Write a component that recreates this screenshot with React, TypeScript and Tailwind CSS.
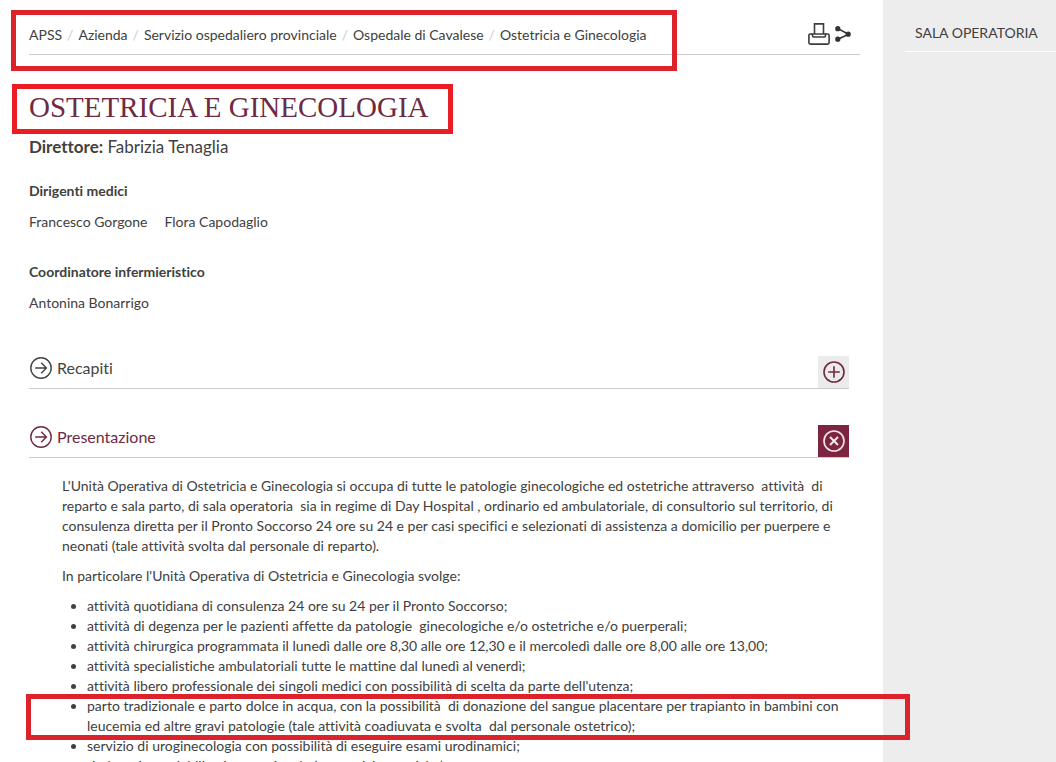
import { ReactNode } from "react";

const breadcrumbs = [
  "APSS",
  "Azienda",
  "Servizio ospedaliero provinciale",
  "Ospedale di Cavalese",
  "Ostetricia e Ginecologia",
];

const activities = [
  { text: "attività quotidiana di consulenza 24 ore su 24 per il Pronto Soccorso;" },
  { text: "attività di degenza per le pazienti affette da patologie\u00a0 ginecologiche e/o ostetriche e/o puerperali;" },
  { text: "attività chirurgica programmata il lunedì dalle ore 8,30 alle ore 12,30 e il mercoledì dalle ore 8,00 alle ore 13,00;" },
  { text: "attività specialistiche ambulatoriali tutte le mattine dal lunedì al venerdì;" },
  { text: "attività libero professionale dei singoli medici con possibilità di scelta da parte dell'utenza;" },
  {
    text: "parto tradizionale e parto dolce in acqua, con la possibilità\u00a0 di donazione del sangue placentare per trapianto in bambini con leucemia ed altre gravi patologie (tale attività coadiuvata e svolta\u00a0 dal personale ostetrico);",
    marked: true,
  },
  { text: "servizio di uroginecologia con possibilità di eseguire esami urodinamici;" },
  { text: "rieducazione, riabilitazione perineale (operatrici ostetriche)." },
];

function Marker({ className }: { className: string }) {
  return <div className={`absolute pointer-events-none border-5 ${className}`} />;
}

function PrintIcon() {
  return (
    <svg width="22" height="22" viewBox="0 0 22 22" fill="none" stroke="#3c3c3c" strokeWidth="1.6">
      <path d="M6.5 11V.9h9V11" />
      <path d="M4.5 11H2.2Q.9 11 .9 12.3v7.5q0 1.3 1.3 1.3h17.6q1.3 0 1.3-1.3v-7.5q0-1.3-1.3-1.3h-2.3" />
      <path d="M4.5 11h13v1.8q0 1.2-1.2 1.2H5.7q-1.2 0-1.2-1.2z" />
    </svg>
  );
}

function ShareIcon() {
  return (
    <svg width="16" height="16" viewBox="0 0 16 16" fill="#333" stroke="#333" strokeWidth="1.6">
      <path d="M3 2.6l10.5 5.6L3 13.2" fill="none" />
      <circle cx="2.8" cy="2.7" r="1.8" />
      <circle cx="13.2" cy="8.2" r="1.8" />
      <circle cx="2.8" cy="13.2" r="1.8" />
    </svg>
  );
}

function ArrowIcon() {
  return (
    <svg width="22" height="22" viewBox="0 0 22 22" fill="none" stroke="currentColor" strokeWidth="1.4">
      <circle cx="11" cy="11" r="10.2" />
      <path d="M5.2 11h11M11.2 5.8l5.2 5.2-5.2 5.2" />
    </svg>
  );
}

interface SectionProps {
  title: string;
  open?: boolean;
  children?: ReactNode;
}
function Section({ title, open, children }: SectionProps) {
  return (
    <section>
      <div className="flex items-start justify-between h-8 mr-[34px] border-b border-[#cccccc] box-content">
        <h2
          className={`flex items-center gap-[5px] pl-px text-base leading-6 ${open ? "text-[#6e2a42]" : "text-[#444444]"}`}
        >
          <ArrowIcon />
          {title}
        </h2>
        <button
          type="button"
          aria-label={open ? "Chiudi" : "Apri"}
          className={`flex items-center justify-center w-[31px] h-8 ${open ? "bg-[#7d2440] text-[#f6e8ec]" : "bg-[#ebebeb] text-[#6e2a42]"}`}
        >
          <svg width="22" height="22" viewBox="0 0 22 22" fill="none" stroke="currentColor" strokeWidth="1.6">
            <circle cx="11" cy="11" r="10" />
            {open ? <path d="M7 7l8 8M15 7l-8 8" strokeWidth="2" /> : <path d="M5.2 11h11.6M11 5.2v11.6" />}
          </svg>
        </button>
      </div>
      {children}
    </section>
  );
}

export default function App() {
  return (
    <div className="flex h-screen overflow-hidden bg-white font-['Lato',sans-serif] [font-variant-ligatures:none] text-sm leading-5 text-[#404040]">
      <main className="flex-1 min-w-0 pl-[29px]">
        <div className="relative flex items-start justify-between mr-[23px] h-[55px] pt-[23px] border-b border-[#cccccc]">
          <nav className="flex pt-0.5" aria-label="Percorso">
            {breadcrumbs.map((item, index) => (
              <span key={item}>
                {index > 0 && <span className="px-[5px] text-[#cccccc]">/</span>}
                <a href="#">{item}</a>
              </span>
            ))}
          </nav>
          <div className="flex items-center gap-[5px] mr-[9px]">
            <button type="button" aria-label="Stampa">
              <PrintIcon />
            </button>
            <button type="button" aria-label="Condividi">
              <ShareIcon />
            </button>
          </div>
          <Marker className="-left-[18px] top-[10px] w-[666px] h-[61px] border-[#dc232b]" />
        </div>

        <div className="relative mt-[34px]">
          <h1 className="text-[29px] leading-9 text-[#6e2a42] font-['Liberation_Serif',serif]">
            OSTETRICIA E GINECOLOGIA
          </h1>
          <Marker className="-left-[17px] -top-[5px] w-[441px] h-[50px] border-[#ea1c24]" />
        </div>
        <p className="mt-2.5 text-[17px] leading-6">
          <b>Direttore:</b> Fabrizia Tenaglia
        </p>

        <h3 className="mt-[22px] font-bold">Dirigenti medici</h3>
        <p className="flex gap-[17px] mt-[11px]">
          <span>Francesco Gorgone</span>
          <span>Flora Capodaglio</span>
        </p>
        <h3 className="mt-[30px] font-bold">Coordinatore infermieristico</h3>
        <p className="mt-[11px]">Antonina Bonarrigo</p>

        <div className="flex flex-col gap-9 mt-[43px]">
          <Section title="Recapiti" />
          <Section title="Presentazione" open>
            <div className="pl-[33px] pr-9 pt-[18px]">
              <p>
                L'Unità Operativa di Ostetricia e Ginecologia si occupa di tutte le patologie ginecologiche ed ostetriche
                attraverso&nbsp; attività&nbsp; di reparto e sala parto, di sala operatoria&nbsp; sia in regime di Day
                Hospital , ordinario ed ambulatoriale, di consultorio sul territorio, di consulenza diretta per il Pronto
                Soccorso 24 ore su 24 e per casi specifici e selezionati di assistenza a domicilio per puerpere e neonati
                (tale attività svolta dal personale di reparto).
              </p>
              <p className="mt-2.5">In particolare l'Unità Operativa di Ostetricia e Ginecologia svolge:</p>
              <ul className="mt-2.5 pl-[25px] list-disc">
                {activities.map((item) => (
                  <li key={item.text} className="relative">
                    {item.text}
                    {item.marked && <Marker className="-left-[61px] -right-[63px] -top-0.5 h-[46px] border-[#dc232b]" />}
                  </li>
                ))}
              </ul>
            </div>
          </Section>
        </div>
      </main>

      <aside className="w-[173px] bg-[#ededed] pl-[22px] pt-[23px]">
        <a href="#" className="block pl-2.5 pb-2 border-b border-white">
          SALA OPERATORIA
        </a>
      </aside>
    </div>
  );
}
